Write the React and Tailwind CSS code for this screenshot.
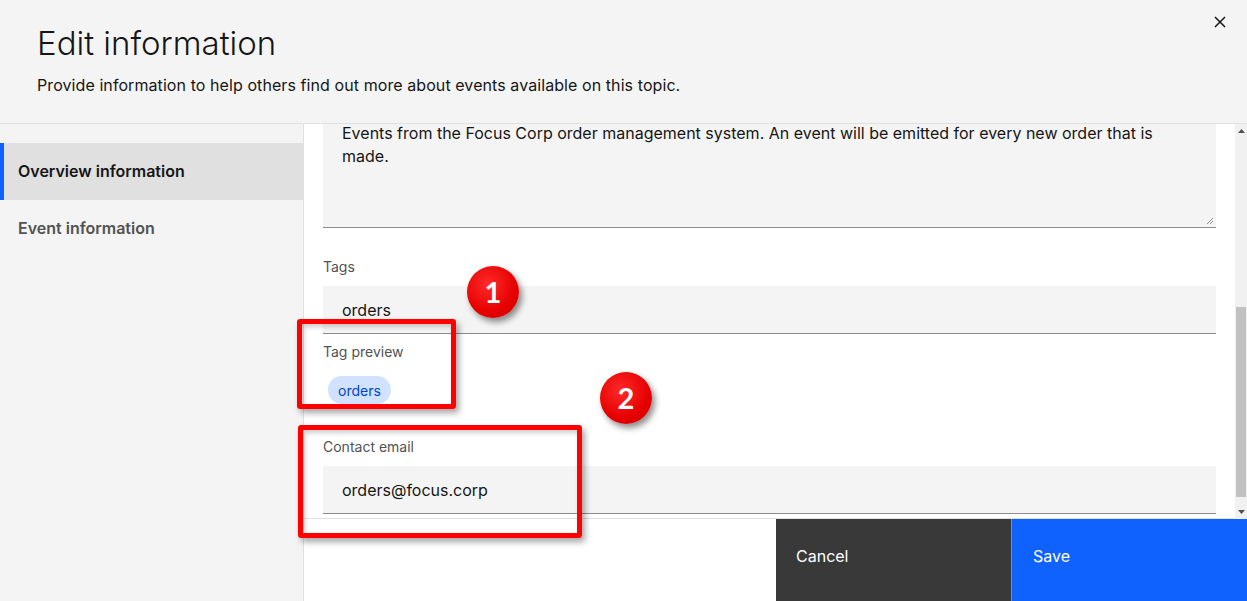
import React from 'react';

const Label = ({ children, className = '' }) => (
  <div className={`text-[14px] leading-[18px] text-[#525252] ${className}`}>{children}</div>
);

const Field = ({ value, className = '' }) => (
  <div className={`h-[48px] bg-[#f4f4f4] border-b border-[#8d8d8d] pl-[19px] flex items-center text-[16px] text-[#161616] ${className}`}>
    {value}
  </div>
);

const Marker = ({ n, className }) => (
  <div
    className={`absolute w-[52px] h-[52px] rounded-full flex items-center justify-center text-white font-bold text-[29px] font-['Lato',sans-serif] shadow-[3px_4px_6px_rgba(0,0,0,0.45)] bg-[radial-gradient(circle_at_40%_35%,#ff2a2a_0%,#e60000_60%,#c80000_100%)] ${className}`}
  >
    {n}
  </div>
);

const Box = ({ className }) => (
  <div
    className={`absolute border-[5px] border-[#ff0000] rounded-[3px] shadow-[3px_4px_6px_rgba(0,0,0,0.35),inset_2px_3px_5px_rgba(0,0,0,0.2)] ${className}`}
  />
);

export default function App() {
  return (
    <div className="relative w-[1247px] h-[601px] overflow-hidden flex flex-col bg-white font-['Inter',sans-serif] text-[#161616]">
      {/* Header */}
      <div className="h-[124px] shrink-0 bg-[#f4f4f4] border-b border-[#e0e0e0] pl-[37px] pr-[21px] flex justify-between">
        <div className="pt-[23px]">
          <h1 className="text-[33px] leading-[40px] font-light">Edit information</h1>
          <p className="mt-[10px] text-[16px] leading-[24px] tracking-[0.08px] text-[#161616]">
            Provide information to help others find out more about events available on this topic.
          </p>
        </div>
        <svg className="mt-[16px]" width="12" height="12" viewBox="0 0 12 12" fill="none">
          <path d="M1 1L11 11M11 1L1 11" stroke="#161616" strokeWidth="1.5" />
        </svg>
      </div>

      {/* Body */}
      <div className="flex flex-1 min-h-0">
        {/* Side nav */}
        <div className="w-[304px] shrink-0 bg-[#f4f4f4] border-r border-[#e0e0e0] pt-[19px]">
          <div className="h-[57px] flex items-center bg-[#e0e0e0] border-l-[4px] border-[#0f62fe] pl-[14px] pb-[1px] text-[16px] font-semibold text-[#161616]">
            Overview information
          </div>
          <div className="h-[57px] flex items-center pl-[18px] pb-[1px] text-[16px] font-semibold text-[#525252]">
            Event information
          </div>
        </div>

        {/* Main */}
        <div className="flex-1 flex flex-col min-w-0">
          <div className="h-[395px] flex shrink-0">
            <div className="flex-1 border-b border-[#e0e0e0] pl-[19px] pr-[19px]">
              {/* Description textarea (scrolled) */}
              <div className="relative h-[104px] bg-[#f4f4f4] border-b border-[#8d8d8d] pl-[19px] pr-[16px] pt-[1px] text-[16px] leading-[16px] text-[#161616]">
                <span className="block">
                  Events from the Focus Corp order management system. An event will be emitted for every new order that is
                </span>
                <span className="block mt-[7px]">made.</span>
                <svg className="absolute right-[2px] bottom-[2px]" width="8" height="8" viewBox="0 0 8 8">
                  <path d="M7 1L1 7M7 4L4 7" stroke="#8d8d8d" strokeWidth="1" />
                </svg>
              </div>

              <Label className="mt-[30px] mb-[10px]">Tags</Label>
              <Field value="orders" />

              <Label className="mt-[9px] mb-[15px]">Tag preview</Label>
              <div className="ml-[5px] inline-flex h-[28px] items-center rounded-full bg-[#d0e2ff] px-[10px] text-[14px] text-[#0043ce]">
                orders
              </div>

              <Label className="mt-[34px] mb-[10px]">Contact email</Label>
              <Field value="orders@focus.corp" className="h-[47px]" />
            </div>

            {/* Scrollbar */}
            <div className="w-[12px] shrink-0 bg-[#f1f1f1] flex flex-col">
              <div className="h-[14px] flex items-center justify-center">
                <svg width="7" height="4" viewBox="0 0 7 4"><path d="M0 4L3.5 0L7 4Z" fill="#505050" /></svg>
              </div>
              <div className="flex-1 pt-[169px] px-[1px]">
                <div className="h-[190px] bg-[#c1c1c1]" />
              </div>
              <div className="h-[14px] flex items-center justify-center">
                <svg width="7" height="4" viewBox="0 0 7 4"><path d="M0 0L3.5 4L7 0Z" fill="#505050" /></svg>
              </div>
            </div>
          </div>

          {/* Footer buttons */}
          <div className="flex flex-1">
            <div className="flex-1" />
            <button className="w-[236px] bg-[#393939] border-r border-[#8d8d8d] text-left pl-[20px] pt-[25px] self-stretch flex items-start text-[16px] leading-[24px] text-white">
              Cancel
            </button>
            <button className="w-[235px] bg-[#0f62fe] text-left pl-[21px] pt-[25px] self-stretch flex items-start text-[16px] leading-[24px] text-white">
              Save
            </button>
          </div>
        </div>
      </div>

      {/* Annotations */}
      <Box className="left-[297px] top-[319px] w-[159px] h-[90px]" />
      <Box className="left-[298px] top-[425px] w-[284px] h-[113px]" />
      <Marker n="1" className="left-[467px] top-[266px]" />
      <Marker n="2" className="left-[600px] top-[372px]" />
    </div>
  );
}
